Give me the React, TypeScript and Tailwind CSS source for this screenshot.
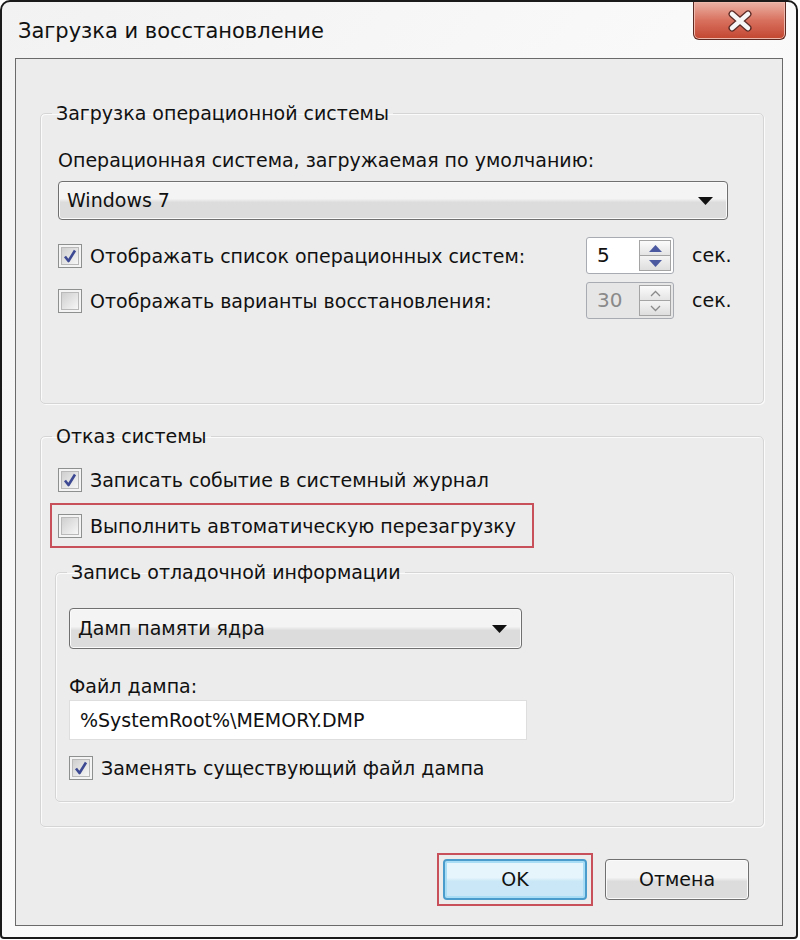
import { ReactNode } from "react"

const Check = ({ checked }: { checked?: boolean }) => (
    <span className="flex w-6 h-6 shrink-0 border border-[#8e8f8f] bg-[#f4f4f4] p-[2px]">
        <span className="flex flex-1 items-center justify-center border border-[#b9b9b9] bg-linear-to-br from-[#cfcfcf] to-[#f7f7f7]">
            {checked && (
                <svg width="16" height="16" viewBox="0 0 16 16">
                    <path d="M3 8.5 L6.5 13 L13 2.5" fill="none" stroke="#3d4a93" strokeWidth="2.6" strokeLinejoin="round" />
                </svg>
            )}
        </span>
    </span>
)

const Arrow = () => (
    <svg width="15" height="8" viewBox="0 0 15 8">
        <path d="M0 0 H15 L7.5 8 Z" fill="#111" />
    </svg>
)

const Select = ({ value, className }: { value: string, className: string }) => (
    <div className={`flex items-center justify-between rounded-[4px] border border-[#707070] bg-linear-to-b from-[#f4f4f4] from-45% to-[#dcdcdc] to-55% pl-2 pr-[14px] text-[19px] text-[#111] shadow-[inset_0_0_0_1px_#fafafa] ${className}`}>
        <span>{value}</span>
        <Arrow />
    </div>
)

const Spin = ({ value, disabled }: { value: string, disabled?: boolean }) => {
    const c = disabled ? "#8a8a8a" : "#4b5aa0"
    return (
        <div className={`flex h-[37px] w-[88px] rounded-[3px] border border-[#a8abb2] p-[2px] ${disabled ? 'bg-[#e6e6e6]' : 'bg-white'}`}>
            <div className={`flex-1 pl-2 text-[20px] leading-[31px] ${disabled ? 'text-[#8a8a8a]' : 'text-[#111]'}`}>{value}</div>
            <div className="flex w-[32px] flex-col border border-[#a4a4a4]">
                <div className="flex flex-1 items-center justify-center border-b border-[#a4a4a4] bg-linear-to-b from-[#fbfbfb] to-[#e4e4e4]">
                    <svg width="13" height="7" viewBox="0 0 13 7">
                        {disabled ? <path d="M2 6 L6.5 1.5 L11 6" fill="none" stroke={c} strokeWidth="1.3" /> : <path d="M0 7 L6.5 0 L13 7 Z" fill={c} />}
                    </svg>
                </div>
                <div className="flex flex-1 items-center justify-center bg-linear-to-b from-[#f4f4f4] to-[#dedede]">
                    <svg width="13" height="7" viewBox="0 0 13 7">
                        {disabled ? <path d="M2 1 L6.5 5.5 L11 1" fill="none" stroke={c} strokeWidth="1.3" /> : <path d="M0 0 L6.5 7 L13 0 Z" fill={c} />}
                    </svg>
                </div>
            </div>
        </div>
    )
}

const Group = ({ title, className, children }: { title: string, className: string, children: ReactNode }) => (
    <fieldset className={`rounded-[5px] border border-[#d5d5d5] shadow-[inset_1px_1px_0_#fbfbfb,1px_1px_0_#fbfbfb] ${className}`}>
        <legend className="ml-[11px] px-[4px] text-[19px] leading-[24px] text-[#111]">{title}</legend>
        {children}
    </fieldset>
)

const Row = ({ checked, label }: { checked?: boolean, label: string }) => (
    <div className="flex items-center gap-[8px]">
        <Check checked={checked} />
        <span className="text-[19px] leading-[24px] text-[#111]">{label}</span>
    </div>
)

const App = () => {
    return (
        <div className="h-[940px] w-[800px] bg-white font-['DejaVu_Sans',Verdana,sans-serif]">
            <div className="flex h-[939px] w-[798px] flex-col rounded-t-[10px] rounded-b-[4px] border-[2px] border-[#1a1a1a] bg-linear-to-br from-[#f2f2f2] via-[#fafafa] to-[#ededed]">
                <div className="flex h-[56px] items-start justify-between">
                    <div className="pl-[16px] pt-[17px] text-[21px] leading-[24px] text-[#111]">Загрузка и восстановление</div>
                    <div className="mr-[10px] flex h-[38px] w-[93px] items-center justify-center rounded-b-[6px] border border-t-0 border-[#5c2a22] bg-linear-to-b from-[#eab2a6] from-0% via-[#d8705e] via-50% to-[#c2452f] shadow-[inset_0_0_0_1px_#f0b9ad]">
                        <svg width="30" height="22" viewBox="0 0 30 22">
                            <path d="M7 4 L23 18 M23 4 L7 18" stroke="#5b2a25" strokeWidth="7" strokeLinecap="round" />
                            <path d="M7 4 L23 18 M23 4 L7 18" stroke="#f6f6f6" strokeWidth="4.5" strokeLinecap="round" />
                        </svg>
                    </div>
                </div>
                <div className="mx-[13px] flex h-[868px] flex-col border border-[#6a6a6a] bg-[#ececec] px-[24px] pt-[42px]">
                    <Group title="Загрузка операционной системы" className="h-[303px] w-[724px]">
                        <div className="px-[17px]">
                            <div className="mt-[23px] text-[19px] leading-[24px] text-[#111]">Операционная система, загружаемая по умолчанию:</div>
                            <Select value="Windows 7" className="mt-[9px] h-[39px] w-[670px]" />
                            <div className="mt-[17px] flex items-center">
                                <div className="w-[528px]"><Row checked label="Отображать список операционных систем:" /></div>
                                <Spin value="5" />
                                <span className="ml-[18px] text-[19px] text-[#111]">сек.</span>
                            </div>
                            <div className="mt-[8px] flex items-center">
                                <div className="w-[528px]"><Row label="Отображать варианты восстановления:" /></div>
                                <Spin value="30" disabled />
                                <span className="ml-[18px] text-[19px] text-[#111]">сек.</span>
                            </div>
                        </div>
                    </Group>
                    <Group title="Отказ системы" className="mt-[20px] h-[403px] w-[724px]">
                        <div className="px-[17px]">
                            <div className="mt-[20px]"><Row checked label="Записать событие в системный журнал" /></div>
                            <div className="-ml-[8px] mt-[11px] flex h-[45px] w-[484px] items-center border-[2px] border-[#c8505a] pl-[6px]">
                                <Row label="Выполнить автоматическую перезагрузку" />
                            </div>
                            <Group title="Запись отладочной информации" className="-ml-[3px] mt-[12px] h-[242px] w-[679px]">
                                <div className="px-[13px]">
                                    <Select value="Дамп памяти ядра" className="mt-[24px] h-[41px] w-[453px]" />
                                    <div className="mt-[25px] text-[19px] leading-[24px] text-[#111]">Файл дампа:</div>
                                    <div className="mt-[2px] flex h-[40px] w-[458px] items-center border border-[#dedede] bg-white pl-[10px] text-[19px] text-[#111]">%SystemRoot%\MEMORY.DMP</div>
                                    <div className="mt-[16px]"><Row checked label="Заменять существующий файл дампа" /></div>
                                </div>
                            </Group>
                        </div>
                    </Group>
                    <div className="mt-[26px] flex justify-end gap-[12px] pr-[9px]">
                        <div className="border-[2px] border-[#c8505a] p-[4px]">
                            <button className="h-[41px] w-[144px] rounded-[4px] border-[2px] border-[#4a9ccc] bg-linear-to-b from-[#e6f5fc] from-45% to-[#c9e7f6] to-55% text-[19px] text-[#111] shadow-[inset_0_0_0_2px_#a8ddf5]">OK</button>
                        </div>
                        <div className="pt-[6px]">
                            <button className="h-[41px] w-[144px] rounded-[4px] border border-[#707070] bg-linear-to-b from-[#f4f4f4] from-45% to-[#dcdcdc] to-55% text-[19px] text-[#111] shadow-[inset_0_0_0_1px_#fafafa]">Отмена</button>
                        </div>
                    </div>
                </div>
            </div>
        </div>
    )
}

export default App
